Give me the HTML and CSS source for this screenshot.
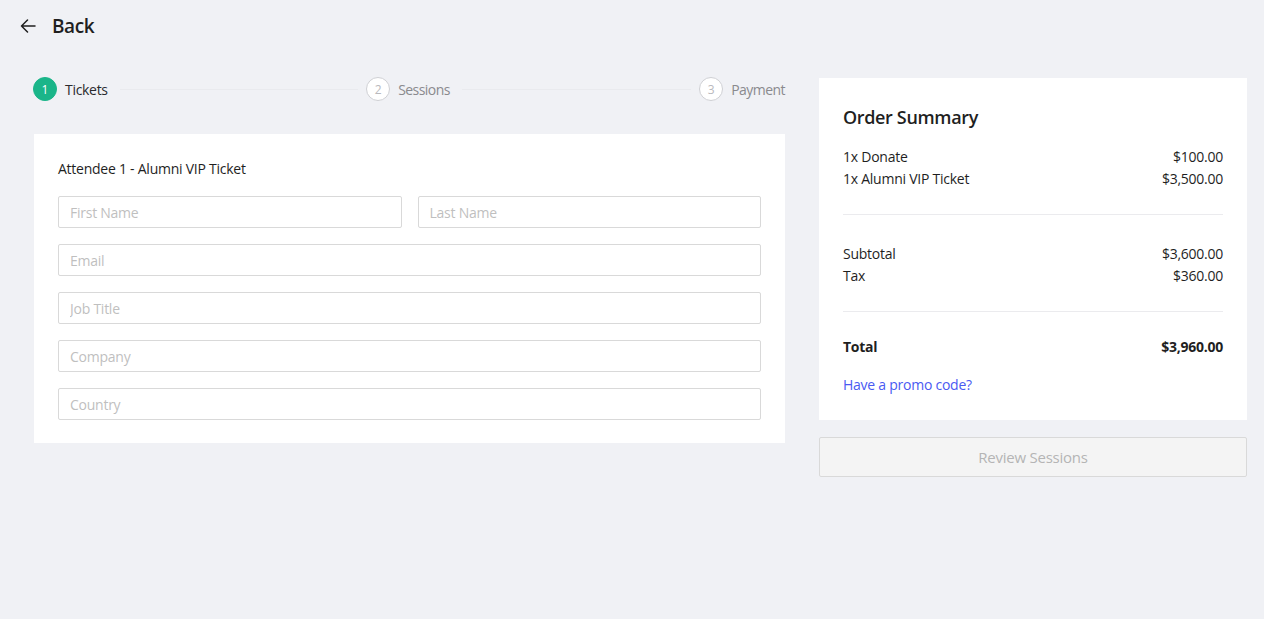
FILE: index.html
```html
<!DOCTYPE html>
<html lang="en">
<head>
<meta charset="utf-8">
<title>Checkout</title>
<link rel="stylesheet" href="styles.css">
</head>
<body>
<div class="page">
  <header class="topbar">
    <a class="back" href="#">
      <svg class="back-icon" width="16" height="14" viewBox="0 0 16 14" aria-hidden="true">
        <path d="M15 7H1.5M7.5 1 1.5 7l6 6" fill="none" stroke="#1f1f1f" stroke-width="1.5" stroke-linecap="round" stroke-linejoin="round"/>
      </svg>
      <span class="back-text">Back</span>
    </a>
  </header>
  <div class="layout">
    <main class="main-col">
      <ol class="steps">
        <li class="step active"><span class="step-num">1</span><span class="step-label">Tickets</span><span class="step-line"></span></li>
        <li class="step"><span class="step-num">2</span><span class="step-label">Sessions</span><span class="step-line"></span></li>
        <li class="step last"><span class="step-num">3</span><span class="step-label">Payment</span></li>
      </ol>
      <section class="card attendee">
        <h2 class="attendee-title">Attendee 1 - Alumni VIP Ticket</h2>
        <div class="fields">
          <div class="row two">
            <input class="field" type="text" placeholder="First Name">
            <input class="field" type="text" placeholder="Last Name">
          </div>
          <input class="field" type="text" placeholder="Email">
          <input class="field" type="text" placeholder="Job Title">
          <input class="field" type="text" placeholder="Company">
          <input class="field" type="text" placeholder="Country">
        </div>
      </section>
    </main>
    <aside class="side-col">
      <section class="card summary">
        <h2 class="summary-title">Order Summary</h2>
        <div class="lines">
          <div class="line"><span>1x Donate</span><span>$100.00</span></div>
          <div class="line"><span>1x Alumni VIP Ticket</span><span>$3,500.00</span></div>
        </div>
        <hr class="divider first">
        <div class="lines">
          <div class="line"><span>Subtotal</span><span>$3,600.00</span></div>
          <div class="line"><span>Tax</span><span>$360.00</span></div>
        </div>
        <hr class="divider second">
        <div class="line total"><span>Total</span><span>$3,960.00</span></div>
        <a class="promo" href="#">Have a promo code?</a>
      </section>
      <button class="review" type="button" disabled>Review Sessions</button>
    </aside>
  </div>
</div>
</body>
</html>
```
FILE: styles.css
```css
* { box-sizing: border-box; }
html, body {
  margin: 0;
  padding: 0;
  background: #f0f1f5;
}
body {
  font-family: "Open Sans", "Noto Sans", "Liberation Sans", sans-serif;
  color: #1f1f1f;
  font-size: 14px;
  letter-spacing: -0.25px;
}
.page {
  padding: 0 17px 0 34px;
}
.topbar {
  height: 52px;
  display: flex;
  align-items: center;
  margin-left: -14px;
}
.back {
  display: flex;
  align-items: center;
  text-decoration: none;
  color: #1f1f1f;
}
.back-icon {
  margin-right: 16px;
}
.back-text {
  font-size: 19px;
  font-weight: 600;
  letter-spacing: -0.4px;
}
.layout {
  display: flex;
  gap: 34px;
  margin-top: 26px;
  align-items: flex-start;
}
.main-col {
  flex: 0 0 751px;
}
.side-col {
  flex: 1;
}
.steps {
  list-style: none;
  margin: 0 0 34px -1px;
  padding: 0;
  display: flex;
  align-items: center;
  height: 22px;
}
.step {
  display: flex;
  align-items: center;
  flex: 1;
  min-width: 0;
}
.step.last {
  flex: none;
}
.step-num {
  flex: none;
  width: 24px;
  height: 24px;
  border-radius: 50%;
  border: 1px solid #cfd0d4;
  background: #fff;
  color: #b9b9bd;
  font-size: 12px;
  letter-spacing: 0;
  display: flex;
  align-items: center;
  justify-content: center;
}
.step.active .step-num {
  background: #1ab589;
  border-color: #1ab589;
  color: #fff;
}
.step-label {
  margin-left: 8px;
  color: #8a8a8e;
  font-size: 14px;
  letter-spacing: -0.55px;
}
.step.active .step-label {
  color: #2a2a2e;
  letter-spacing: -0.3px;
}
.step-line {
  flex: 1;
  height: 1px;
  background: #e9eaee;
  margin: 0 8px 0 12px;
}
.card {
  background: #fff;
}
.attendee {
  padding: 24px 24px 23px;
}
.attendee-title {
  font-size: 14px;
  font-weight: 400;
  margin: 0 0 16px;
  line-height: 22px;
}
.fields {
  display: flex;
  flex-direction: column;
  gap: 16px;
}
.row.two {
  display: grid;
  grid-template-columns: 1fr 1fr;
  gap: 16px;
}
.field {
  display: block;
  width: 100%;
  height: 32px;
  border: 1px solid #d9d9d9;
  border-radius: 2px;
  padding: 0 11px;
  font-family: inherit;
  font-size: 14px;
  letter-spacing: -0.25px;
  color: #1f1f1f;
  background: #fff;
  outline: none;
}
.field::placeholder {
  color: #bfbfbf;
}
.summary {
  padding: 24px;
}
.summary-title {
  font-size: 18px;
  font-weight: 600;
  margin: 1px 0 15px;
  line-height: 28px;
  letter-spacing: -0.35px;
}
.lines {
  display: flex;
  flex-direction: column;
}
.line {
  display: flex;
  justify-content: space-between;
  line-height: 22px;
  font-size: 14px;
}
.divider {
  border: 0;
  border-top: 1px solid #ebebee;
  margin: 24px 0 28px;
}
.divider.second {
  margin-bottom: 24px;
}
.line.total {
  font-weight: 700;
}
.promo {
  display: block;
  margin-top: 16px;
  color: #4a5af2;
  text-decoration: none;
  line-height: 22px;
}
.review {
  display: block;
  width: 100%;
  height: 40px;
  margin-top: 17px;
  background: #f4f4f4;
  border: 1px solid #d9d9d9;
  border-radius: 2px;
  color: #b5b5b5;
  font-family: inherit;
  font-size: 15px;
  letter-spacing: -0.25px;
}
```
